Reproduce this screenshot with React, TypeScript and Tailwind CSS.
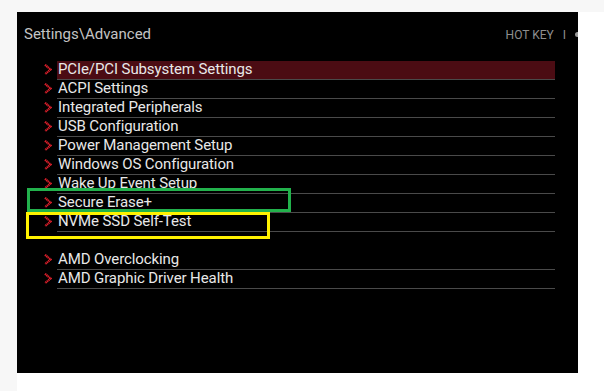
import React from "react";

type Item = { label: string; active?: boolean } | null;

const items: Item[] = [
  { label: "PCIe/PCI Subsystem Settings", active: true },
  { label: "ACPI Settings" },
  { label: "Integrated Peripherals" },
  { label: "USB Configuration" },
  { label: "Power Management Setup" },
  { label: "Windows OS Configuration" },
  { label: "Wake Up Event Setup" },
  { label: "Secure Erase+" },
  { label: "NVMe SSD Self-Test" },
  null,
  { label: "AMD Overclocking" },
  { label: "AMD Graphic Driver Health" },
];

function Chevron() {
  return (
    <svg width="8" height="11" viewBox="0 0 8 11" className="shrink-0">
      <polyline
        points="1,0.8 6.6,5.5 1,10.2"
        fill="none"
        stroke="#e3202c"
        strokeWidth="2.2"
        strokeDasharray="1.3 0.5"
      />
    </svg>
  );
}

function MenuRow({ item }: { item: Item }) {
  if (!item) return <li className="h-[19px]" />;
  return (
    <li className="flex items-center">
      <div className="-mt-[3px] flex w-[40px] justify-end pr-[5px]">
        <Chevron />
      </div>
      <div
        className={`h-[19px] w-[498px] border-b border-[#4a4a4a] pl-[1px] text-[15px] leading-[17px] tracking-[-0.1px] text-[#e8e8e8] ${
          item.active ? "bg-[#4b0c13]" : ""
        }`}
      >
        {item.label}
      </div>
    </li>
  );
}

export default function App() {
  return (
    <div className="flex h-[391px] w-[604px] flex-col bg-[#f7f7f7] font-['Roboto','Liberation_Sans',sans-serif]">
      <div className="h-[12px] shrink-0" />
      <div className="flex flex-1">
        <div className="w-[17px] shrink-0" />
        <div className="flex-1 bg-white">
          <div className="relative h-[361px] w-[561px] overflow-hidden bg-black">
            <div className="flex items-center justify-between pl-[7px] pt-[14px]">
              <span className="text-[15px] leading-[17px] text-[#c4c4c4]">Settings\Advanced</span>
              <span className="flex items-center gap-[9px] pr-[1px] text-[12px] leading-[16px] text-[#8e8e8e]">
                <span>HOT KEY</span>
                <span>I</span>
                <span className="mr-[-3px] h-[5px] w-[5px] rounded-full bg-[#9a9a9a]" />
              </span>
            </div>
            <ul className="mt-[18px]">
              {items.map((item, i) => (
                <MenuRow key={i} item={item} />
              ))}
            </ul>

            {/* annotation boxes drawn over the screenshot */}
            <div className="absolute left-[10px] top-[176px] h-[24px] w-[264px] border-[3px] border-[#22b14c]" />
            <div className="absolute left-[9px] top-[200px] h-[27px] w-[244px] border-[3px] border-[#fff200]" />
          </div>
        </div>
      </div>
    </div>
  );
}
